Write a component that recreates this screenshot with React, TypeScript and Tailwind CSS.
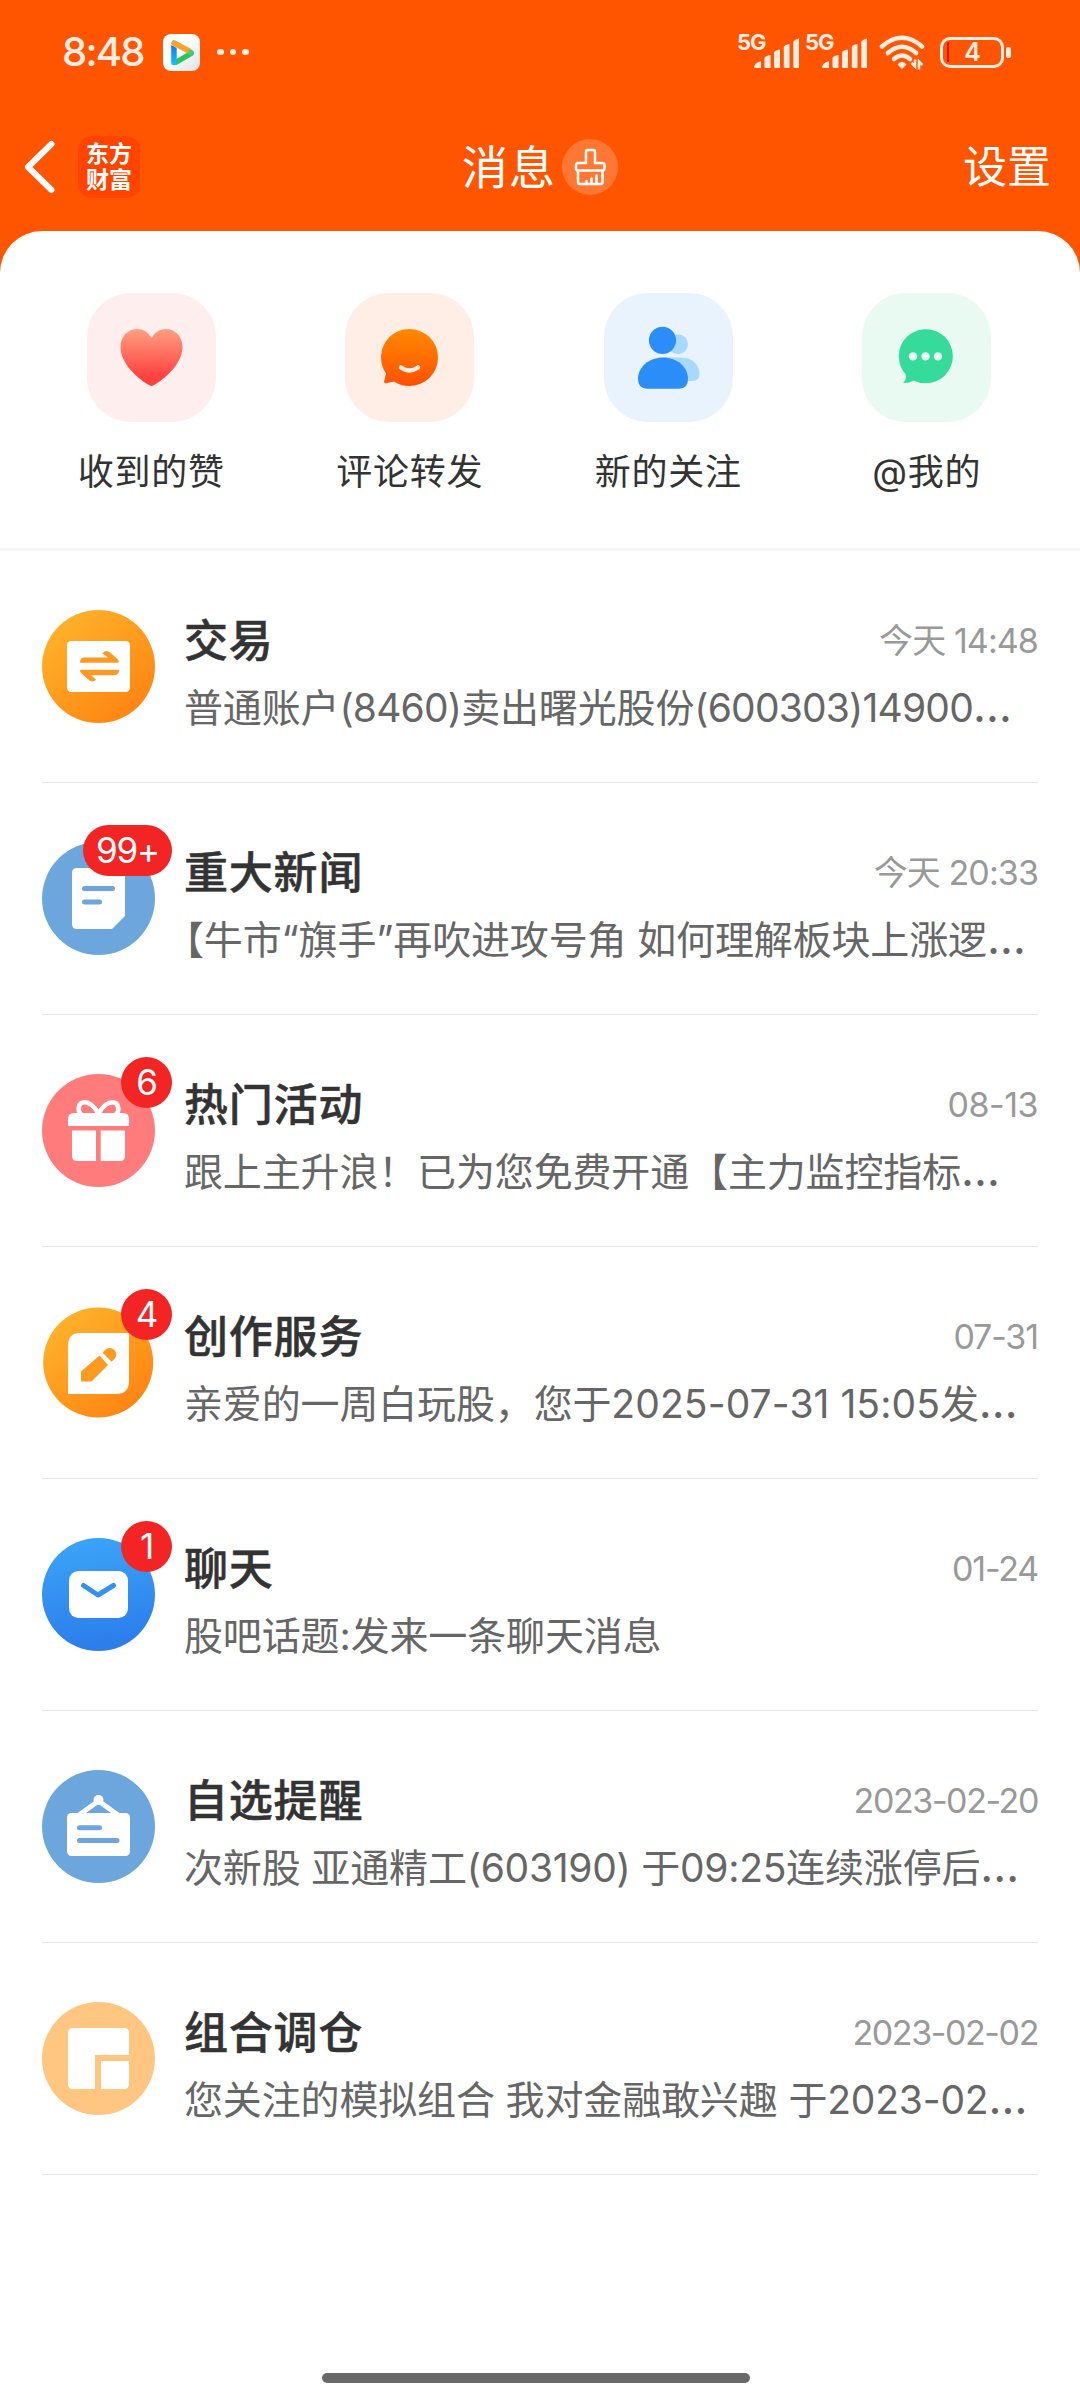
import type { ReactNode } from 'react';

interface QuickAction {
    label: string;
    tile: string;
    icon: ReactNode;
}

interface Message {
    title: string;
    time: string;
    text: string;
    // letter spacing of the digits in the preview and in the date
    tracking: string;
    timeTracking: string;
    badge?: string;
    icon: ReactNode;
}

/* ---------- Quick action icons (129 x 129 tiles) ---------- */

const HeartIcon = () => (
    <svg viewBox="0 0 129 129" className="size-full">
        <defs>
            <linearGradient id="heart" x1="0" y1="0" x2="0" y2="1">
                <stop offset="0" stopColor="#ff9f80" />
                <stop offset="0.85" stopColor="#ff4040" />
            </linearGradient>
        </defs>
        <path
            d="M64.5 45C61 39 56 36 50.5 36C41 36 33.5 43.5 33.5 54C33.5 69 48 84 62.5 92.300Q64.5 93.600 66.5 92.300C81 84 95.5 69 95.5 54C95.5 43.5 88 36 79 36C73 36 68 39 64.5 45Z"
            fill="url(#heart)"
        />
    </svg>
);

const CommentIcon = () => (
    <svg viewBox="0 0 129 129" className="size-full">
        <defs>
            <linearGradient id="comment" x1="0" y1="0" x2="0" y2="1">
                <stop offset="0" stopColor="#ff8a00" />
                <stop offset="1" stopColor="#ff5000" />
            </linearGradient>
        </defs>
        <path
            d="M64.5 36A28.4 28.4 0 1 1 64.5 93Q56 93 49 88.5L41 90.2Q38.7 90.2 39.2 88L41 80.5A28.4 28.4 0 0 1 64.5 36Z"
            fill="url(#comment)"
        />
        <path
            d="M56 74.5Q64.5 80.5 73 74.5"
            fill="none"
            stroke="#ffeee5"
            strokeWidth="4.5"
            strokeLinecap="round"
        />
    </svg>
);

const FollowIcon = () => (
    <svg viewBox="0 0 129 129" className="size-full">
        <g fill="#a9d8ff">
            <circle cx="74" cy="51.3" r="10" />
            <path d="M60 64.5H78C89 64.5 95.5 73 95.5 81Q95.5 88 88 88H60Z" />
        </g>
        <g fill="#2a8df8">
            <circle cx="58.5" cy="47.3" r="13.6" />
            <path d="M59 64.5C73 64.5 84 74 84 86Q84 95.7 75 95.7H43Q34 95.7 34 86C34 74 45 64.5 59 64.5Z" />
        </g>
    </svg>
);

const MentionIcon = () => (
    <svg viewBox="0 0 129 129" className="size-full">
        <path
            d="M63.8 36.2A27 27 0 1 1 63.8 90.3Q57 90.3 51.5 87.5Q47 90.3 41.2 90Q45 86 43.5 81A27 27 0 0 1 63.8 36.2Z"
            fill="#36db9b"
        />
        <g fill="#e8faf2">
            <circle cx="51" cy="63.4" r="4.2" />
            <circle cx="63.5" cy="63.4" r="4.2" />
            <circle cx="76" cy="63.4" r="4.2" />
        </g>
    </svg>
);

/* ---------- Message icons (113 x 113 circles) ---------- */

const AmberGradient = ({ id }: { id: string }) => (
    <defs>
        <linearGradient id={id} x1="0.1" y1="0.1" x2="0.8" y2="0.95">
            <stop offset="0" stopColor="#ffb32b" />
            <stop offset="1" stopColor="#ff8412" />
        </linearGradient>
    </defs>
);

const TradeIcon = () => (
    <svg viewBox="0 0 113 113" className="size-full">
        <AmberGradient id="trade" />
        <circle cx="56.5" cy="56.5" r="56.5" fill="url(#trade)" />
        <rect x="25" y="31" width="63" height="51" rx="4.5" fill="#fff" />
        <g fill="#fb9a23">
            <path d="M42.5 47.5H66L60.5 43.5Q63.5 39.5 67.5 42L76 49.5Q77.8 52.8 75.5 52.8H38Q38 47.5 42.5 47.5Z" />
            <path d="M72.5 65.2H49L54 69.5Q51.5 73 47.5 70.5L39 63Q36.8 59.8 39.5 59.8H77Q77 65.2 72.5 65.2Z" />
        </g>
    </svg>
);

const NewsIcon = () => (
    <svg viewBox="0 0 113 113" className="size-full">
        <circle cx="56.5" cy="56.5" r="56.5" fill="#6ca6dd" />
        <path d="M35 26H78Q83 26 83 31V74L70 87H35Q30 87 30 82V31Q30 26 35 26Z" fill="#fff" />
        <path d="M42.5 46.5H70.5M42.5 60H57.5" stroke="#6ca6dd" strokeWidth="5" strokeLinecap="round" />
    </svg>
);

const GiftIcon = () => (
    <svg viewBox="0 0 113 113" className="size-full">
        <circle cx="56.5" cy="56.5" r="56.5" fill="#ff7b7c" />
        <g fill="none" stroke="#fff" strokeWidth="4.6">
            <path d="M56.5 39.5C52 32 47 28.3 42.5 28.3C36 28.3 35 37 39.5 41" />
            <path d="M56.5 39.5C61 32 66 28.3 70.5 28.3C77 28.3 78 37 73.5 41" />
        </g>
        <g fill="#fff">
            <path d="M26 52V45Q26 39 32 39H81Q87 39 87 45V52Z" />
            <path d="M30 56.5H54V87H35Q30 87 30 82Z" />
            <path d="M58.7 56.5H83V82Q83 87 78 87H58.7Z" />
        </g>
    </svg>
);

const CreateIcon = () => (
    <svg viewBox="0 0 113 113" className="size-full">
        <AmberGradient id="create" />
        <circle cx="56.2" cy="56.5" r="55" fill="url(#create)" />
        <path d="M38 27H87V75Q87 88 74 88H26V40Q26 27 38 27Z" fill="#fff" />
        <g fill="#fd9a20">
            <path d="M39 65.5L57.5 49.5L66 59L49.5 75.5H39Z" />
            <path d="M60.5 46.5L63 44A6.5 6.5 0 0 1 72.5 53L69.5 55.8Z" />
        </g>
    </svg>
);

const ChatIcon = () => (
    <svg viewBox="0 0 113 113" className="size-full">
        <defs>
            <linearGradient id="chat" x1="0" y1="0" x2="0.15" y2="1">
                <stop offset="0" stopColor="#3ca6f8" />
                <stop offset="1" stopColor="#2c7eeb" />
            </linearGradient>
        </defs>
        <circle cx="56.5" cy="56.5" r="56.5" fill="url(#chat)" />
        <rect x="27" y="33" width="59" height="47" rx="9.5" fill="#fff" />
        <path
            d="M41.5 47.5L56 57L71.5 47.5"
            fill="none"
            stroke="#3491f2"
            strokeWidth="5"
            strokeLinecap="round"
            strokeLinejoin="round"
        />
    </svg>
);

const WatchIcon = () => (
    <svg viewBox="0 0 113 113" className="size-full">
        <circle cx="56.5" cy="56.5" r="56.5" fill="#6ca6dd" />
        <circle cx="56.5" cy="30" r="5" fill="#fff" />
        <path d="M37 45L56.5 31L76 45" fill="none" stroke="#fff" strokeWidth="5" />
        <rect x="25" y="43" width="63" height="43" rx="4.5" fill="#fff" />
        <path d="M37.5 57.7H57.5M37.5 70.4H75" stroke="#6ca6dd" strokeWidth="5" strokeLinecap="round" />
    </svg>
);

const PortfolioIcon = () => (
    <svg viewBox="0 0 113 113" className="size-full">
        <circle cx="56.5" cy="56.5" r="56.5" fill="#fec680" />
        <g fill="#fff">
            <path d="M31 26H82Q87 26 87 31V53H53V87H31Q26 87 26 82V31Q26 26 31 26Z" />
            <path d="M59 59H87V82Q87 87 82 87H59Z" />
        </g>
    </svg>
);

/* ---------- Data ---------- */

const actions: QuickAction[] = [
    { label: '收到的赞', tile: 'bg-[#feeeee]', icon: <HeartIcon /> },
    { label: '评论转发', tile: 'bg-[#ffeee5]', icon: <CommentIcon /> },
    { label: '新的关注', tile: 'bg-[#e8f3fe]', icon: <FollowIcon /> },
    { label: '@我的', tile: 'bg-[#e8faf2]', icon: <MentionIcon /> },
];

const messages: Message[] = [
    {
        title: '交易',
        time: '今天 14:48',
        text: '普通账户(8460)卖出曙光股份(600303)14900…',
        tracking: 'tracking-[-0.8px]',
        timeTracking: 'tracking-[-0.9px]',
        icon: <TradeIcon />,
    },
    {
        title: '重大新闻',
        time: '今天 20:33',
        text: '【牛市“旗手”再吹进攻号角 如何理解板块上涨逻…',
        tracking: 'tracking-normal',
        timeTracking: 'tracking-[-0.9px]',
        badge: '99+',
        icon: <NewsIcon />,
    },
    {
        title: '热门活动',
        time: '08-13',
        text: '跟上主升浪！已为您免费开通【主力监控指标…',
        tracking: 'tracking-normal',
        timeTracking: 'tracking-[-0.5px]',
        badge: '6',
        icon: <GiftIcon />,
    },
    {
        title: '创作服务',
        time: '07-31',
        text: '亲爱的一周白玩股，您于2025-07-31 15:05发…',
        tracking: 'tracking-[0.1px]',
        timeTracking: 'tracking-[-1.1px]',
        badge: '4',
        icon: <CreateIcon />,
    },
    {
        title: '聊天',
        time: '01-24',
        text: '股吧话题:发来一条聊天消息',
        tracking: 'tracking-normal',
        timeTracking: 'tracking-[-1.2px]',
        badge: '1',
        icon: <ChatIcon />,
    },
    {
        title: '自选提醒',
        time: '2023-02-20',
        text: '次新股 亚通精工(603190) 于09:25连续涨停后…',
        tracking: 'tracking-[-0.3px]',
        timeTracking: 'tracking-[-1.4px]',
        icon: <WatchIcon />,
    },
    {
        title: '组合调仓',
        time: '2023-02-02',
        text: '您关注的模拟组合 我对金融敢兴趣 于2023-02…',
        tracking: 'tracking-[-0.2px]',
        timeTracking: 'tracking-[-1.4px]',
        icon: <PortfolioIcon />,
    },
];

/* ---------- Status bar ---------- */

function Signal() {
    return (
        <div className="flex h-[36px] w-[68px] items-start">
            <span className="w-[17px] text-[22px] leading-[16px] font-bold tracking-[-1px]">5G</span>
            <svg viewBox="0 0 45 36" className="h-[36px] w-[45px]" fill="currentColor">
                <path d="M0 34Q0 29 7 27V34H2Q0 34 0 32Z" />
                <path d="M10.5 24Q11 22 16.5 21V34H12Q10.5 34 10.5 32.5Z" />
                <path d="M20 18.5Q20.5 16.5 26 15.5V34H21.5Q20 34 20 32.5Z" />
                <path d="M29.800 13Q30 11 35.5 10V34H31.3Q29.8 34 29.8 32.5Z" />
                <path d="M39.3 8Q39.5 6 45 4.5V34H40.8Q39.3 34 39.3 32.5Z" />
            </svg>
        </div>
    );
}

function StatusBar() {
    return (
        <div className="flex h-[104px] items-center pr-[69px] pl-[62px] text-[#ffede4]">
            <span className="w-[101px] text-[40px] leading-none font-medium tracking-[-1.8px]">8:48</span>
            <svg viewBox="0 0 37 37" className="size-[37px]">
                <defs>
                    <linearGradient id="player" x1="0" y1="0" x2="1" y2="1">
                        <stop offset="0.4" stopColor="#fff" />
                        <stop offset="1" stopColor="#dde3e8" />
                    </linearGradient>
                    <linearGradient id="play-blue" x1="0" y1="0" x2="0" y2="1">
                        <stop offset="0" stopColor="#0a7cf0" />
                        <stop offset="1" stopColor="#17c4fb" />
                    </linearGradient>
                </defs>
                <rect width="37" height="37" rx="8" fill="url(#player)" />
                <g fill="none" strokeWidth="5.5" strokeLinecap="round">
                    <path d="M13.5 28L28 19.5" stroke="#2fc45b" />
                    <path d="M11 9L26 17" stroke="#f8a22c" />
                </g>
                <path d="M8.2 11L13.7 14V28.5A2.7 2.7 0 0 1 8.2 28.5Z" fill="url(#play-blue)" />
                <circle cx="28" cy="18.8" r="2.8" fill="#41cc74" />
            </svg>
            <div className="ml-[17px] flex gap-[6px]">
                <i className="size-[6.5px] rounded-full bg-current" />
                <i className="size-[6.5px] rounded-full bg-current" />
                <i className="size-[6.5px] rounded-full bg-current" />
            </div>

            <div className="ml-auto flex items-center">
                <Signal />
                <Signal />
                <svg viewBox="0 0 46 36" className="ml-[6px] h-[36px] w-[46px]" fill="none" stroke="currentColor">
                    <g strokeWidth="4.5" strokeLinecap="round">
                        <path d="M3 12.5Q23 -5 43 12.5" />
                        <path d="M8.8 19Q23 6.5 37.2 19" />
                        <path d="M15 25Q23 18 31 25" />
                    </g>
                    <path d="M18.5 30.5Q23 25 27.5 30.5L23 35Z" fill="currentColor" stroke="none" />
                    <path d="M32.5 29L36 32.5V25.5M40 35.5V27.5L43.5 31" strokeWidth="2.5" />
                </svg>
                <div className="ml-[15px] flex items-center">
                    <div className="flex h-[31px] w-[64px] items-center rounded-[10px] border-3 border-current">
                        <i className="ml-[4px] h-[20px] w-[2px] bg-[#e01000]" />
                        <span className="flex-1 pr-[5px] text-center text-[25px] leading-none font-semibold">4</span>
                    </div>
                    <i className="ml-[2px] h-[11px] w-[5px] rounded-[2px] bg-current" />
                </div>
            </div>
        </div>
    );
}

function Header() {
    return (
        <div className="grid h-[127px] grid-cols-[1fr_auto_1fr] items-center pr-[29px] pb-[2px] pl-[29px] text-white">
            <div className="-ml-[6px] flex items-center gap-[23px]">
                <svg viewBox="0 0 32 54" className="h-[54px] w-[32px]">
                    <path
                        d="M28.5 4L5 27L28.5 50"
                        fill="none"
                        stroke="currentColor"
                        strokeWidth="6"
                        strokeLinecap="round"
                        strokeLinejoin="round"
                    />
                </svg>
                <div className="flex size-[62px] flex-col items-center justify-center rounded-[14px] bg-[#ff4400] text-[23px] leading-[26px] font-bold">
                    <span>东方</span>
                    <span>财富</span>
                </div>
            </div>
            <div className="flex items-center gap-[6px]">
                <h1 className="text-[46px] leading-none tracking-[1.3px]">消息</h1>
                <span className="flex size-[56px] items-center justify-center rounded-full bg-white/20">
                    <svg
                        viewBox="0 0 56 56"
                        className="size-[56px]"
                        fill="none"
                        stroke="currentColor"
                        strokeWidth="2.5"
                        strokeLinejoin="round"
                        strokeLinecap="round"
                    >
                        <path d="M24 24V13Q24 11 26 11H31Q33 11 33 13V24H40Q42.5 24 42.5 26.5V29Q42.5 31.5 40 31.5H16Q14 31.5 14 29V26.5Q14 24 16 24Z" />
                        <path d="M16 32V43Q16 45 18 45H38.5Q40.5 45 40.5 43V32" />
                        <path d="M24.5 45V42M29.5 45V39.5M34.5 45V36.5" />
                    </svg>
                </span>
            </div>
            <span className="text-right text-[44px] leading-none">设置</span>
        </div>
    );
}

// Digits, the ellipsis and a leading bracket are spaced differently from the Chinese text
function Preview({ text, tracking }: { text: string; tracking: string }) {
    const parts = text.split(/([\x21-\x7e]+|…|^【)/).filter(Boolean);

    return (
        <p className="mt-[8px] text-[39px] leading-[60px] tracking-[-0.15px] whitespace-nowrap text-[#666]">
            {parts.map((part, i) => {
                if (part === '…') {
                    return (
                        <span key={i} className="text-[45px] leading-none">
                            {part}
                        </span>
                    );
                }
                if (part === '【' && i === 0) {
                    return (
                        <span key={i} className="-ml-[19px]">
                            {part}
                        </span>
                    );
                }
                if (/^[\x21-\x7e]/.test(part)) {
                    return (
                        <span key={i} className={tracking}>
                            {part}
                        </span>
                    );
                }
                return part;
            })}
        </p>
    );
}

function MessageRow({ message }: { message: Message }) {
    return (
        <li className="flex h-[232px] border-b border-[#e8e8e8] pt-[59px]">
            <div className="relative size-[113px] shrink-0">
                {message.icon}
                {message.badge && (
                    <span className="absolute -top-[17px] -right-[17px] flex h-[51px] min-w-[51px] items-center justify-center rounded-full bg-[#f22424] px-[13px] text-[35px] leading-none tracking-[-1.2px] text-white">
                        {message.badge}
                    </span>
                )}
            </div>
            <div className="ml-[29px] min-w-0 flex-1">
                <div className="flex h-[60px] items-center justify-between pt-[2px]">
                    <h2 className="text-[44px] leading-none font-medium tracking-[0.8px] text-[#333] [-webkit-text-stroke:0.5px_#333]">
                        {message.title}
                    </h2>
                    <time className={`text-[34px] leading-none text-[#999] ${message.timeTracking}`}>
                        {message.time}
                    </time>
                </div>
                <Preview text={message.text} tracking={message.tracking} />
            </div>
        </li>
    );
}

export default function App() {
    return (
        <div className="flex h-[2400px] w-[1080px] flex-col overflow-hidden bg-[#ff5500] font-['Inter','Noto_Sans_CJK_SC',sans-serif]">
            <StatusBar />
            <Header />

            <main className="flex flex-1 flex-col rounded-t-[42px] bg-white">
                {/* Quick actions */}
                <nav className="grid h-[320px] grid-cols-4 border-b-3 border-[#f6f6f6] pt-[62px] pr-[24px] pl-[22px]">
                    {actions.map((action) => (
                        <div key={action.label} className="flex flex-col items-center">
                            <div className={`size-[129px] rounded-[44px] ${action.tile}`}>{action.icon}</div>
                            <span className="mt-[25px] text-[36px] leading-[50px] tracking-[0.8px] whitespace-nowrap text-[#333]">
                                {action.label}
                            </span>
                        </div>
                    ))}
                </nav>

                {/* Messages */}
                <ul className="px-[42px]">
                    {messages.map((message) => (
                        <MessageRow key={message.title} message={message} />
                    ))}
                </ul>

                {/* Gesture bar */}
                <div className="mt-auto mb-[17px] ml-[322px] h-[10px] w-[428px] rounded-full bg-[#696969]" />
            </main>
        </div>
    );
}
